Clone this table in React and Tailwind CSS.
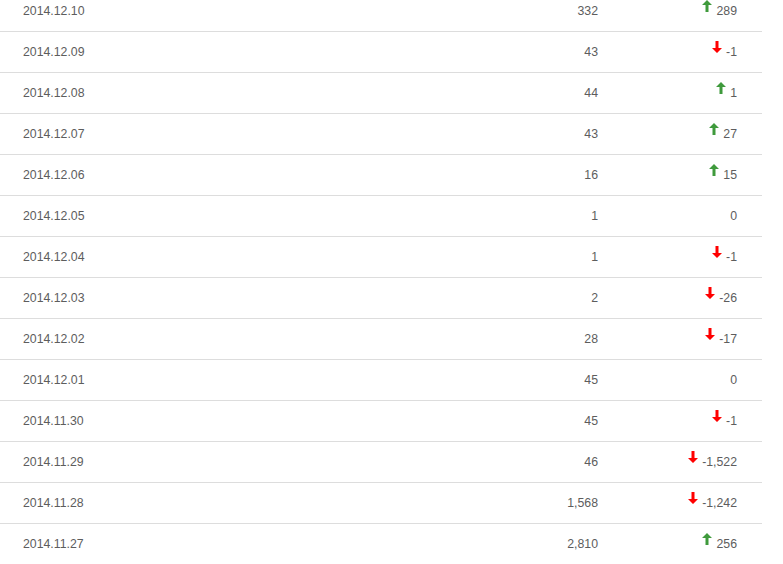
import React from "react";

const rows = [
  ["2014.12.10", "332", 289],
  ["2014.12.09", "43", -1],
  ["2014.12.08", "44", 1],
  ["2014.12.07", "43", 27],
  ["2014.12.06", "16", 15],
  ["2014.12.05", "1", 0],
  ["2014.12.04", "1", -1],
  ["2014.12.03", "2", -26],
  ["2014.12.02", "28", -17],
  ["2014.12.01", "45", 0],
  ["2014.11.30", "45", -1],
  ["2014.11.29", "46", -1522],
  ["2014.11.28", "1,568", -1242],
  ["2014.11.27", "2,810", 256],
];

function Up() {
  return (
    <svg width="10" height="12" viewBox="0 0 10 12" className="inline-block align-[3px] mr-[4px]">
      <polygon points="5,0 10,5 6.5,5 6.5,12 3.5,12 3.5,5 0,5" fill="#3f9a3c" />
    </svg>
  );
}

function Down() {
  return (
    <svg width="10" height="12" viewBox="0 0 10 12" className="inline-block align-[3px] mr-[4px]">
      <polygon points="3.5,0 6.5,0 6.5,7 10,7 5,12 0,7 3.5,7" fill="#ff0000" />
    </svg>
  );
}

export default function App() {
  return (
    <div className="w-[783px] h-[564px] overflow-hidden bg-white font-['Liberation_Sans',Arial,sans-serif] text-[12.3px] text-[#5d5d5d]">
      <div className="w-[762px] -mt-[9px]">
        {rows.map(([d, c, ch]) => (
          <div key={d} className="grid grid-cols-[1fr_139px_139px] h-[41px] border-b border-[#dddddd] leading-[24px]">
            <div className="flex items-center pl-[23px]">{d}</div>
            <div className="flex items-center justify-end pr-[25px]">{c}</div>
            <div className="flex items-center justify-end pr-[25px]">
              <span>
                {ch > 0 ? <Up /> : ch < 0 ? <Down /> : null}
                {ch.toLocaleString("en-US")}
              </span>
            </div>
          </div>
        ))}
      </div>
    </div>
  );
}
